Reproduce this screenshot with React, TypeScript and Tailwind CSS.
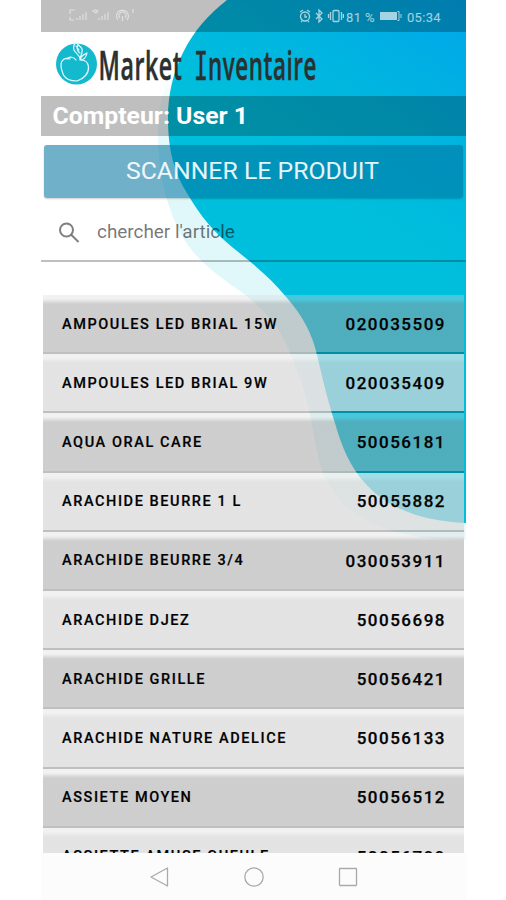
interface Article {
  name: string;
  code: string;
}

const articles: Article[] = [
  { name: "AMPOULES LED BRIAL 15W", code: "020035509" },
  { name: "AMPOULES LED BRIAL 9W", code: "020035409" },
  { name: "AQUA ORAL CARE", code: "50056181" },
  { name: "ARACHIDE BEURRE 1 L", code: "50055882" },
  { name: "ARACHIDE BEURRE 3/4", code: "030053911" },
  { name: "ARACHIDE DJEZ", code: "50056698" },
  { name: "ARACHIDE GRILLE", code: "50056421" },
  { name: "ARACHIDE NATURE ADELICE", code: "50056133" },
  { name: "ASSIETE MOYEN", code: "50056512" },
  { name: "ASSIETTE AMUSE GUEULE", code: "50056799" },
];

function Wave() {
  return (
    <svg className="absolute inset-0" width="425" height="853" viewBox="41 0 425 853">
      <defs>
        <linearGradient id="wave" gradientUnits="userSpaceOnUse" x1="466" y1="0" x2="330" y2="200">
          <stop offset="0" stopColor="#00a6ea" />
          <stop offset="0.55" stopColor="#00b6e0" />
          <stop offset="1" stopColor="#00bfdc" />
        </linearGradient>
        <linearGradient id="halo" gradientUnits="userSpaceOnUse" x1="0" y1="60" x2="0" y2="540">
          <stop offset="0" stopColor="#00bfdc" stopOpacity="0" />
          <stop offset="0.2" stopColor="#00bfdc" stopOpacity="0.12" />
          <stop offset="0.6" stopColor="#00bfdc" stopOpacity="0.12" />
          <stop offset="1" stopColor="#00bfdc" stopOpacity="0.08" />
        </linearGradient>
      </defs>
      <path
        d="M200 30C168 65 157 100 158 140C160 178 166 206 182 236C194 258 218 276 240 291C264 309 279 326 288 348C300 376 308 400 313 430C318 466 326 488 348 508C376 532 420 540 466 540V0H228Z"
        fill="url(#halo)"
      />
      <path
        d="M227 0C190 28 168 70 168 118C168 150 174 172 187 193C200 216 214 232 232 247C252 263 270 277 287 298C302 315 312 333 317 355C323 380 327 398 334 420C342 448 350 466 364 482C389 511 426 521 466 523V0Z"
        fill="url(#wave)"
      />
    </svg>
  );
}

function StatusBar() {
  return (
    <div className="flex h-8 shrink-0 items-center justify-between bg-black/25 pr-[24px] pl-[27px] text-white/65">
      <svg width="70" height="18" viewBox="0 0 70 18" fill="none" stroke="#fff" strokeOpacity="0.5" strokeWidth="1.2">
        <path d="M7 3H2v4M2 10v3h4M9 13v-2M12 13V9M15 13V7M18 13V5" />
        <path d="M25 4l2-1 3 1-2 2zM31 13v-2M34 13V9M37 13V7M40 13V5" />
        <path d="M50 13a6 6 0 1 1 9 0M52 11a3.500 3.500 0 1 1 5 0M54.500 9v5M65 2v4" />
      </svg>
      <div className="flex items-center text-[13px] leading-none">
        <svg width="45" height="16" viewBox="0 0 45 16" fill="none" stroke="currentColor" strokeWidth="1.3">
          <circle cx="6" cy="8.500" r="4.500" />
          <path d="M1 4l3-2M8 2l3 2M6 6v3h2M3 13l-1 1M9 13l1 1" />
          <path d="M17 5l6 6-3 3V2l3 3-6 6" />
          <rect x="34" y="2.500" width="6" height="11" rx="1" />
          <path d="M31.500 4v8M29.500 6v4M42.500 4v8M44.400 6v4" />
        </svg>
        <span className="w-[35px] pt-0.5 pl-0.5 tracking-[0.4px] whitespace-nowrap">81 %</span>
        <svg width="22" height="12" viewBox="0 0 22 12" className="ml-px">
          <rect x="0" y="2" width="17" height="8" rx="0.5" fill="currentColor" />
          <path d="M17.500 1.500h1.500v9h-1.500M21 4v4" fill="none" stroke="currentColor" />
        </svg>
        <span className="w-[40px] pt-0.5 pl-[5px] tracking-[0.3px]">05:34</span>
      </div>
    </div>
  );
}

function Logo() {
  return (
    <svg width="42" height="44" viewBox="0 0 42 44" fill="none">
      <circle cx="20.500" cy="22" r="20.500" fill="#15b9ce" />
      <g stroke="#e6fbff" strokeWidth="1.2" strokeLinecap="round" strokeLinejoin="round">
        <path d="M14 17C9 15 5.500 18 5 22C4.500 27 6 29 7.500 33C10 38 16 39 21 39C28 37 33 31 32.500 25C32 20 29 18 25 18" />
        <path d="M11 17C13 14 18 15 20 18" />
        <path d="M24 18C25 14 20 12 18 8C17 4 18 2 20 0C21 3 25 4 26 7C27 11 24 14 24 18C26 12 28 13 31 11C30 16 28 18 24 18" />
        <path d="M20 4l3 4M22 3c-2 4 0 7 2 8" />
      </g>
    </svg>
  );
}

function Brand() {
  return (
    <svg
      className="overflow-visible font-['Open_Sans',sans-serif] tracking-[1px]"
      width="222"
      height="50"
      viewBox="0 0 222 50"
      fontSize="39"
      fontWeight="600"
      fill="#2b3031"
      stroke="#2b3031"
      strokeWidth="0.5"
    >
      <text x="0.500" y="41" textLength="84" lengthAdjust="spacingAndGlyphs">
        Market
      </text>
      <text
        x="96"
        y="41"
        textLength="14"
        lengthAdjust="spacingAndGlyphs"
        fontWeight="400"
        className="font-['DejaVu_Sans_Mono',monospace] tracking-normal"
      >
        I
      </text>
      <text x="110" y="41" textLength="109" lengthAdjust="spacingAndGlyphs">
        nventaire
      </text>
    </svg>
  );
}

function ArticleRow({ article, dark }: { article: Article; dark: boolean }) {
  return (
    <li
      className={`flex h-[59.2px] shrink-0 items-center justify-between border-b-2 border-black/25 bg-clip-padding pt-0.5 pr-[18px] pl-[19px] text-black ${
        dark
          ? "bg-[linear-gradient(rgba(215,215,215,0.34)_4px,rgba(158,158,158,0.5)_9px)]"
          : "bg-[linear-gradient(rgba(235,235,235,0.69)_4px,rgba(216,216,216,0.71)_9px)]"
      }`}
    >
      <span className="text-[14.500px] font-medium tracking-[1.58px] [-webkit-text-stroke:0.2px_#111]">{article.name}</span>
      <span className="text-[17px] font-medium tracking-[1.5px] [-webkit-text-stroke:0.25px_#111]">{article.code}</span>
    </li>
  );
}

function NavigationBar() {
  return (
    <nav className="flex h-[47px] items-center justify-center gap-[74px] bg-[#fcfcfc]">
      <svg width="20" height="20" viewBox="0 0 20 20" fill="none" stroke="#aaa" strokeWidth="1.3">
        <path d="M17.500 1v18L1 10Z" strokeLinejoin="round" />
      </svg>
      <svg width="20" height="20" viewBox="0 0 20 20" fill="none" stroke="#aaa" strokeWidth="1.3">
        <circle cx="10" cy="10" r="9.200" />
      </svg>
      <svg width="20" height="20" viewBox="0 0 20 20" fill="none" stroke="#aaa" strokeWidth="1.3">
        <rect x="1.500" y="1.500" width="17" height="17" rx="0.5" />
      </svg>
    </nav>
  );
}

export default function App() {
  return (
    <div className="h-[900px] w-[506px] overflow-hidden bg-white pl-[41px] font-['Roboto',sans-serif]">
      <div className="w-[425px]">
        <div className="relative h-[853px] overflow-hidden bg-white">
          <Wave />
          <div className="relative flex h-full flex-col">
            <StatusBar />
            <header className="flex h-16 shrink-0 items-center pl-[15px]">
              <Logo />
              <Brand />
            </header>
            <h1 className="flex h-10 shrink-0 items-center bg-black/25 pb-px pl-[11.500px] text-[24.800px] font-bold text-white">
              Compteur: User 1
            </h1>
            <button className="mx-[3px] mt-[9px] flex h-[53px] shrink-0 items-center justify-center rounded-[3px] bg-[#00729f]/56 pr-0.5 pb-0.5 text-[24.800px] text-white/90 shadow-[0_1px_2px_rgba(0,0,0,0.2)]">
              SCANNER LE PRODUIT
            </button>
            <label className="flex h-16 shrink-0 items-center border-b-2 border-black/25 pt-1.5 pl-4">
              <svg width="24" height="24" viewBox="0 0 24 24" fill="none" stroke="#000" strokeOpacity="0.5" strokeWidth="2">
                <circle cx="9.500" cy="10" r="6.500" />
                <path d="M14.500 15l7 7" />
              </svg>
              <span className="pl-4 text-[18.900px] text-black/55">chercher l'article</span>
            </label>
            <ul className="mt-[33px] flex flex-col px-0.5">
              {articles.map((article, index) => (
                <ArticleRow key={article.code} article={article} dark={index % 2 === 0} />
              ))}
            </ul>
          </div>
        </div>
        <NavigationBar />
      </div>
    </div>
  );
}
